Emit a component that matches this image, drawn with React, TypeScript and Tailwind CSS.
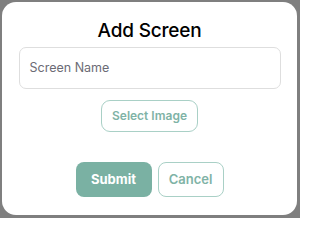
import React from "react";

export default function App() {
  return (
    <div className="w-[300px] h-[218px] bg-[#7f7f7f] pt-[2px] pl-[2px] pr-[3px] pb-[3px]" style={{ fontFamily: "Inter, 'Noto Sans', sans-serif" }}>
      <div className="w-full h-full bg-white rounded-[14px] flex flex-col items-center">
        <h1 className="mt-[17px] text-[19px] leading-[24px] font-medium text-black tracking-[-0.2px]">Add Screen</h1>
        <div className="mt-[4px] w-[262px] h-[42px] rounded-[7px] border border-[#dedede] flex items-center px-[10px]">
          <span className="text-[12.5px] text-[#6b6b75]">Screen Name</span>
        </div>
        <button className="mt-[11px] w-[97px] h-[32px] rounded-[9px] border border-[#a9d0c6] text-[12px] font-semibold text-[#7fb3a6]">Select Image</button>
        <div className="mt-[30px] flex gap-[6px]">
          <button className="w-[76px] h-[35px] rounded-[8px] bg-[#7ab1a3] text-white text-[13px] font-bold">Submit</button>
          <button className="w-[66px] h-[35px] rounded-[8px] border border-[#a9d0c6] text-[#7fb3a6] text-[13px] font-semibold">Cancel</button>
        </div>
      </div>
    </div>
  );
}
